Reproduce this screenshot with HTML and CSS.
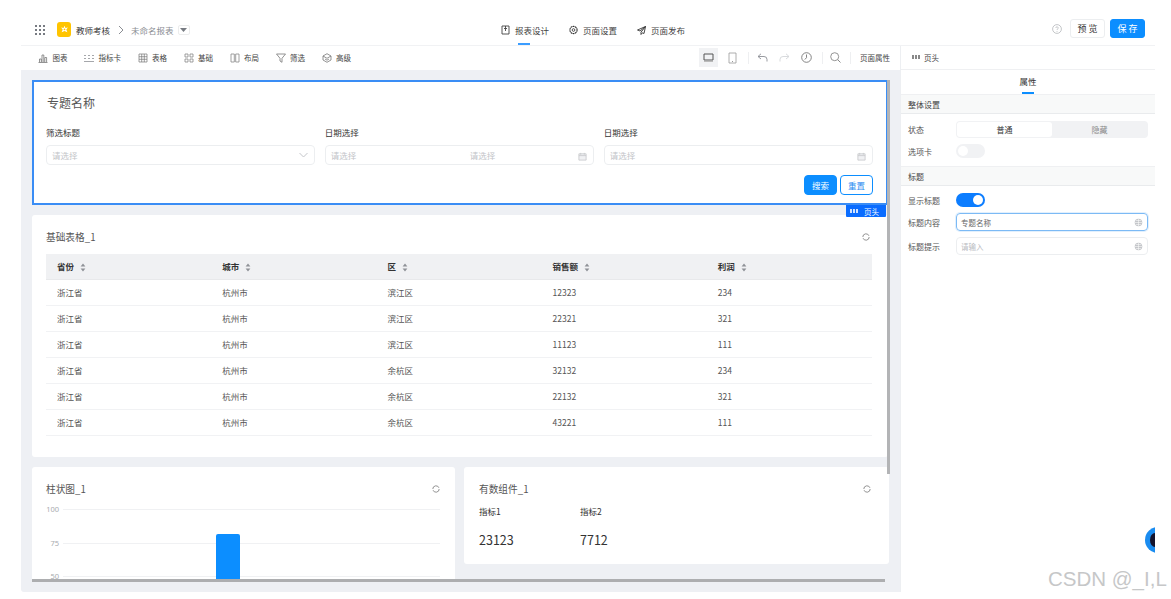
FILE: index.html
```html
<!DOCTYPE html>
<html lang="zh">
<head>
<meta charset="utf-8">
<title>未命名报表</title>
<link rel="stylesheet" href="styles.css">
</head>
<body>
<svg class="defs" width="0" height="0">
  <symbol id="refresh" viewBox="0 0 10 10"><path d="M8.700 3.500A4 4 0 0 0 1 5M1.300 6.500A4 4 0 0 0 9 5" fill="none" stroke="currentColor" stroke-width="1"/></symbol>
  <symbol id="sort" viewBox="0 0 6 9"><path d="M3 .5 5.400 3.500H.6zM3 8.500.6 5.500h4.800z" fill="currentColor"/></symbol>
  <symbol id="cal" viewBox="0 0 10 10"><path d="M1 2h8v7H1zM1 4h8M3 1v2M7 1v2" fill="#f0f1f3" stroke="currentColor" stroke-width=".9"/></symbol>
  <symbol id="globe" viewBox="0 0 10 10"><circle cx="5" cy="5" r="4.200" fill="#c4c6ca"/><path d="M1 5h8M5 1v8M2 2.800h6M2 7.200h6" stroke="#fff" stroke-width=".6"/></symbol>
</svg>
<div class="app">
  <header class="topbar">
    <div class="crumbs">
      <svg class="apps" width="10" height="10" viewBox="0 0 10 10"><path d="M0 0h2v2H0zM4 0h2v2H4zM8 0h2v2H8zM0 4h2v2H0zM4 4h2v2H4zM8 4h2v2H8zM0 8h2v2H0zM4 8h2v2H4zM8 8h2v2H8z" fill="#777b82"/></svg>
      <span class="logo"><svg width="9" height="9" viewBox="0 0 10 10"><path d="M5 .8 6 3.200 8.800 2.800 7 5l1.200 3L5 6.600 1.800 8 3 5 1.200 2.800 4 3.200z" fill="#fff"/><circle cx="5" cy="4.800" r="1" fill="#ffc400"/></svg></span>
      <span class="crumb-app">教师考核</span>
      <svg class="crumb-sep" width="6" height="10" viewBox="0 0 6 10"><path d="M1 1l4 4-4 4" fill="none" stroke="#8a8d93"/></svg>
      <span class="crumb-page">未命名报表</span>
      <span class="crumb-drop"><svg width="7" height="4" viewBox="0 0 7 4"><path d="M0 0h7L3.500 4z" fill="#777b82"/></svg></span>
    </div>
    <nav class="steps">
      <a class="step step-active">
        <svg width="9" height="10" viewBox="0 0 9 10"><path d="M1 1h7v8H1zM4.500 1v5M3 3.500h3" fill="none" stroke="#444" stroke-width=".9"/></svg>
        <span>报表设计</span>
      </a>
      <a class="step">
        <svg width="9" height="10" viewBox="0 0 10 10"><circle cx="5" cy="5" r="4" fill="none" stroke="#333" stroke-width="1.200" stroke-dasharray="2 .5"/><circle cx="5" cy="5" r="1.500" fill="none" stroke="#333" stroke-width=".9"/></svg>
        <span>页面设置</span>
      </a>
      <a class="step">
        <svg width="9" height="9" viewBox="0 0 9 9"><path d="M8.500.5.500 4l2.500 1 5.500-4.500L4 6.200V8.500L5.400 6.800 7 7.500z" fill="none" stroke="#333" stroke-width=".9" stroke-linejoin="round"/></svg>
        <span>页面发布</span>
      </a>
    </nav>
    <div class="actions">
      <svg width="10" height="10" viewBox="0 0 10 10"><circle cx="5" cy="5" r="4.400" fill="none" stroke="#b5b7bb" stroke-width=".8"/><path d="M3.800 4a1.200 1.200 0 1 1 1.700 1.100c-.4.200-.5.400-.5.900M5 7v.8" fill="none" stroke="#b5b7bb" stroke-width=".8"/></svg>
      <button class="btn btn-line">预 览</button>
      <button class="btn btn-main">保 存</button>
    </div>
  </header>

  <div class="body">
    <div class="workspace">
      <div class="toolbar">
        <div class="widgets">
          <a class="widget"><svg width="10" height="10" viewBox="0 0 10 10"><path d="M.5 9.500h9M1.500 9V6h1.800v3M4 9V2h1.800v7M6.800 9V4.500h1.800V9" fill="none" stroke="#777" stroke-width=".8"/></svg>图表</a>
          <a class="widget"><svg width="10" height="10" viewBox="0 0 10 10"><path d="M0 2.500h2M0 5.500h2M4 2.500h2M4 5.500h2M8 2.500h2M8 5.500h2M0 8.500h10" fill="none" stroke="#a5a7ab" stroke-width="1"/></svg>指标卡</a>
          <a class="widget"><svg width="10" height="10" viewBox="0 0 10 10"><path d="M1 1h8v8H1zM1 3.700h8M1 6.300h8M3.700 1v8M6.300 1v8" fill="none" stroke="#777" stroke-width=".7"/></svg>表格</a>
          <a class="widget"><svg width="10" height="10" viewBox="0 0 10 10"><path d="M1 1h3v3H1zM6 1h3v3H6zM1 6h3v3H1zM6 6h3v3H6z" fill="none" stroke="#888" stroke-width=".8"/></svg>基础</a>
          <a class="widget"><svg width="10" height="10" viewBox="0 0 10 10"><path d="M1 1h3.300v8H1zM5.700 1H9v8H5.700z" fill="none" stroke="#888" stroke-width=".8"/></svg>布局</a>
          <a class="widget"><svg width="10" height="10" viewBox="0 0 10 10"><path d="M.5 1h9L6 5.300v4L4 8V5.300z" fill="none" stroke="#777" stroke-width=".8" stroke-linejoin="round"/></svg>筛选</a>
          <a class="widget"><svg width="10" height="10" viewBox="0 0 10 10"><path d="M5 .7 9 3v4L5 9.300 1 7V3zM1 3l4 2.300L9 3M3 6l2 1.200L7 6" fill="none" stroke="#777" stroke-width=".8"/></svg>高级</a>
        </div>
        <div class="tools">
          <span class="tool-on"><svg width="11" height="9" viewBox="0 0 11 9"><path d="M1 1h9v6H1z" fill="none" stroke="#555"/><path d="M1 8.500h9" stroke="#bbb"/></svg></span>
          <span class="tool"><svg width="9" height="12" viewBox="0 0 9 12"><path d="M1 1h7v10H1z" fill="none" stroke="#999" stroke-width=".8"/><path d="M4 9.500h1" stroke="#999"/></svg></span>
          <i class="rule"></i>
          <span class="tool"><svg width="11" height="9" viewBox="0 0 11 9"><path d="M4 .8 1 3.500 4 6M1 3.500h6a3 3 0 0 1 3 3v2" fill="none" stroke="#8d9096" stroke-width=".9"/></svg></span>
          <span class="tool"><svg width="11" height="9" viewBox="0 0 11 9"><path d="M7 .8l3 2.700L7 6M10 3.500H4a3 3 0 0 0-3 3v2" fill="none" stroke="#d4d6d9" stroke-width=".9"/></svg></span>
          <span class="tool"><svg width="11" height="11" viewBox="0 0 11 11"><circle cx="5.500" cy="5.500" r="4.800" fill="none" stroke="#777" stroke-width=".9"/><path d="M5.500 2.500v3.200L3.800 7.500" fill="none" stroke="#777" stroke-width=".9"/></svg></span>
          <i class="rule"></i>
          <span class="tool tool-search"><svg width="11" height="11" viewBox="0 0 11 11"><circle cx="4.700" cy="4.700" r="4" fill="none" stroke="#888" stroke-width=".9"/><path d="M7.700 7.700 10.500 10.500" stroke="#888"/></svg></span>
          <i class="rule"></i>
          <span class="page-props">页面属性</span>
        </div>
      </div>

      <main class="canvas">
        <div class="scroller">
          <section class="head-card">
            <h1 class="head-title">专题名称</h1>
            <div class="filters">
              <div class="filter">
                <label class="filter-label">筛选标题</label>
                <div class="field"><span>请选择</span><svg class="field-end" width="9" height="6" viewBox="0 0 9 6"><path d="M.5 1 4.500 5l4-4" fill="none" stroke="#c4c6ca"/></svg></div>
              </div>
              <div class="filter">
                <label class="filter-label">日期选择</label>
                <div class="field"><span class="half">请选择</span><span>请选择</span><svg class="field-end" width="9" height="9"><use href="#cal"/></svg></div>
              </div>
              <div class="filter">
                <label class="filter-label">日期选择</label>
                <div class="field"><span>请选择</span><svg class="field-end" width="9" height="9"><use href="#cal"/></svg></div>
              </div>
            </div>
            <div class="form-btns">
              <button class="fbtn fbtn-main">搜索</button>
              <button class="fbtn fbtn-line">重置</button>
            </div>
            <div class="tag"><svg width="8" height="4" viewBox="0 0 8 4"><path d="M0 0h2v4H0zM3 0h2v4H3zM6 0h2v4H6z" fill="#cfe2ff"/></svg><span>页头</span></div>
          </section>

          <section class="card table-card">
            <div class="card-head"><h2>基础表格_1</h2><svg class="refresh" width="8" height="8"><use href="#refresh"/></svg></div>
            <table class="grid">
              <thead>
                <tr>
                  <th>省份<svg class="sort" width="6" height="9"><use href="#sort"/></svg></th>
                  <th>城市<svg class="sort" width="6" height="9"><use href="#sort"/></svg></th>
                  <th>区<svg class="sort" width="6" height="9"><use href="#sort"/></svg></th>
                  <th>销售额<svg class="sort" width="6" height="9"><use href="#sort"/></svg></th>
                  <th>利润<svg class="sort" width="6" height="9"><use href="#sort"/></svg></th>
                </tr>
              </thead>
              <tbody>
                <tr><td>浙江省</td><td>杭州市</td><td>滨江区</td><td>12323</td><td>234</td></tr>
                <tr><td>浙江省</td><td>杭州市</td><td>滨江区</td><td>22321</td><td>321</td></tr>
                <tr><td>浙江省</td><td>杭州市</td><td>滨江区</td><td>11123</td><td>111</td></tr>
                <tr><td>浙江省</td><td>杭州市</td><td>余杭区</td><td>32132</td><td>234</td></tr>
                <tr><td>浙江省</td><td>杭州市</td><td>余杭区</td><td>22132</td><td>321</td></tr>
                <tr><td>浙江省</td><td>杭州市</td><td>余杭区</td><td>43221</td><td>111</td></tr>
              </tbody>
            </table>
          </section>

          <div class="row">
            <section class="card chart-card">
              <div class="card-head"><h2>柱状图_1</h2><svg class="refresh" width="8" height="8"><use href="#refresh"/></svg></div>
              <svg class="chart" width="394" height="100" viewBox="0 0 394 100">
                <g class="axis-text"><text x="13" y="9" text-anchor="end">100</text><text x="13" y="43" text-anchor="end">75</text><text x="13" y="76" text-anchor="end">50</text></g>
                <path d="M17 6.500H394M17 40.500H394M17 73.500H394" stroke="#f0f1f3"/>
                <path d="M170 33a2 2 0 0 1 2-2h20a2 2 0 0 1 2 2v67h-24z" fill="#0c8eff"/>
              </svg>
            </section>
            <section class="card metric-card">
              <div class="card-head"><h2>有数组件_1</h2><svg class="refresh" width="8" height="8"><use href="#refresh"/></svg></div>
              <div class="metrics">
                <div class="metric"><span class="metric-name">指标1</span><strong class="metric-val">23123</strong></div>
                <div class="metric"><span class="metric-name">指标2</span><strong class="metric-val">7712</strong></div>
              </div>
            </section>
          </div>
        </div>
        <i class="bar-v"></i>
        <i class="bar-h"></i>
      </main>
    </div>

    <aside class="panel">
      <div class="panel-head"><svg width="8" height="4" viewBox="0 0 8 4"><path d="M0 0h2v4H0zM3 0h2v4H3zM6 0h2v4H6z" fill="#888"/></svg><span>页头</span></div>
      <div class="panel-tab"><span>属性</span></div>
      <div class="sec">整体设置</div>
      <div class="props props-a">
        <div class="prop"><label>状态</label>
          <div class="seg"><span class="seg-on">普通</span><span class="seg-off">隐藏</span></div>
        </div>
        <div class="prop"><label>选项卡</label><span class="sw"></span></div>
      </div>
      <div class="sec sec-b">标题</div>
      <div class="props props-b">
        <div class="prop"><label>显示标题</label><span class="sw sw-on"></span></div>
        <div class="prop"><label>标题内容</label>
          <div class="pinput pinput-focus"><span>专题名称</span><svg width="9" height="9"><use href="#globe"/></svg></div>
        </div>
        <div class="prop"><label>标题提示</label>
          <div class="pinput"><span class="ph">请输入</span><svg width="9" height="9"><use href="#globe"/></svg></div>
        </div>
      </div>
    </aside>
  </div>
  <span class="float-ball"></span>
</div>
<span class="watermark">CSDN @_I,L</span>
</body>
</html>
```

FILE: styles.css
```css
* { box-sizing: border-box; }
html, body { margin: 0; height: 100%; }
body {
  background: #fff;
  font-family: "Noto Sans CJK SC", "Noto Sans", sans-serif;
  font-size: 8.500px;
  color: #333;
  padding: 14px 16px 7px 21px;
  overflow: hidden;
  position: relative;
}
.defs { position: absolute; }
h1, h2 { margin: 0; font-weight: 400; }
a { color: inherit; }
button { font-family: inherit; cursor: pointer; padding: 0; }

.app {
  height: 100%;
  display: flex;
  flex-direction: column;
  background: #fff;
  border-radius: 3px;
  position: relative;
  overflow: hidden;
}

/* top bar */
.topbar {
  height: 32px;
  flex: none;
  display: grid;
  grid-template-columns: 1fr auto 1fr;
  align-items: center;
  padding: 0 10px 0 14px;
  border-bottom: 1px solid #f1f2f4;
}
.crumbs { display: flex; align-items: center; }
.logo {
  width: 14px; height: 15px;
  margin-left: 12px;
  border-radius: 3px;
  background: #ffc400;
  display: flex; align-items: center; justify-content: center;
}
.crumb-app { margin-left: 5px; font-size: 8.500px; color: #333; }
.crumb-sep { margin-left: 8px; }
.crumb-page { margin-left: 7px; color: #8b8e94; }
.crumb-drop {
  width: 12px; height: 10px;
  margin-left: 4px;
  border: 1px solid #eceded;
  border-radius: 2px;
  display: flex; align-items: center; justify-content: center;
}
.steps { display: flex; gap: 20px; margin-top: 1px; margin-left: 6px; }
.step { display: flex; align-items: center; gap: 5px; position: relative; height: 14px; color: #444; }
.step-active::after {
  content: "";
  position: absolute;
  left: 17px;
  bottom: -8px;
  width: 12px; height: 2px;
  background: #3b9dff;
}
.actions { display: flex; align-items: center; justify-content: flex-end; gap: 5px; margin-top: -2px; }
.actions svg { margin-right: 3px; }
.btn {
  width: 35px; height: 19px;
  border-radius: 3px;
  font-size: 9px;
  border: 1px solid #eceef0;
}
.btn-line { background: #fff; color: #333; }
.btn-main { background: #0c8eff; border-color: #0c8eff; color: #fff; }

/* body */
.body { flex: 1; min-height: 0; display: flex; }
.workspace { flex: 1; min-width: 0; display: flex; flex-direction: column; }

.toolbar {
  height: 24px;
  flex: none;
  display: flex;
  align-items: center;
  justify-content: space-between;
  padding: 0 10px 1px 17px;
  font-size: 7.500px;
}
.widgets { display: flex; gap: 16.500px; }
.widget { display: flex; align-items: center; gap: 4.500px; color: #444; }
.tools { display: flex; align-items: center; height: 19px; }
.tool-on {
  width: 19px; height: 19px;
  background: #f1f2f4;
  display: flex; align-items: center; justify-content: center;
}
.tool { display: flex; align-items: center; justify-content: center; width: 11px; margin-left: 11px; }
.tool-on + .tool { margin-left: 9px; }
.rule { width: 1px; height: 12px; background: #eeeff1; margin-left: 9.500px; }
.rule + .tool { margin-left: 8.500px; }
.rule + .tool-search { margin-left: 7.500px; }
.tool-search + .rule { margin-left: 8.500px; }
.page-props { margin-left: 9.500px; color: #444; }

.canvas {
  flex: 1;
  min-height: 0;
  background: #eef0f4;
  padding: 10px 11px;
  position: relative;
}
.scroller {
  height: 100%;
  display: flex;
  flex-direction: column;
  gap: 10px;
  overflow: hidden;
}
.scroller > * { flex: none; }

.head-card {
  height: 125px;
  margin-right: 1px;
  border: 2px solid #3a8df5;
  background: #fff;
  padding: 12px 13px 0 12px;
  position: relative;
}
.head-title { font-size: 12px; line-height: 18px; color: #555; margin-left: 1px; }
.filters { display: grid; grid-template-columns: repeat(3, minmax(0, 1fr)); gap: 9.500px; margin-top: 13px; }
.filter-label { display: block; line-height: 14px; color: #333; }
.field {
  height: 20px;
  margin-top: 6px;
  border: 1px solid #eceef0;
  border-radius: 4px;
  padding: 0 5px;
  display: flex;
  align-items: center;
  color: #c2c4c8;
  position: relative;
}
.half { width: 139px; flex: none; }
.field-end { position: absolute; right: 6px; top: 6px; color: #c6c8cb; }
.form-btns { display: flex; justify-content: flex-end; gap: 3px; margin-top: 10px; }
.fbtn { width: 33px; height: 20px; border-radius: 4px; font-size: 8.500px; border: 1px solid #0c8eff; }
.fbtn-main { background: #0c8eff; color: #fff; }
.fbtn-line { background: #fff; color: #2b8cf0; }
.tag {
  position: absolute;
  right: 0; bottom: -14px;
  width: 40px; height: 12px;
  background: #0a6cff;
  color: #fff;
  font-size: 7.500px;
  display: flex; align-items: center; gap: 6px;
  padding-left: 4px;
  border-radius: 0 0 1px 1px;
  z-index: 2;
}

.card { background: #fff; border-radius: 3px; }
.table-card { height: 242px; margin-right: 1px; padding: 0 16px 0 14px; }
.card-head { display: flex; align-items: center; justify-content: space-between; height: 39px; padding-top: 5px; }
.card-head h2 { font-size: 9.700px; color: #555; }
.refresh { color: #777; }
.table-card .refresh { margin-right: 2px; }

.grid { width: 100%; table-layout: fixed; border-collapse: collapse; }
.grid th {
  height: 25px;
  background: #f0f1f3;
  border-bottom: 1px solid #e8e9eb;
  padding: 0 11px;
  text-align: left;
  font-weight: 700;
  color: #333;
}
.grid td {
  height: 26px;
  padding: 0 11px;
  border-bottom: 1px solid #f1f2f4;
  color: #555;
}
.sort { margin-left: 6px; color: #8f9297; vertical-align: -1.500px; }

.row { display: flex; gap: 9px; align-items: flex-start; }
.chart-card { width: 423px; height: 200px; padding: 0 15px 0 14px; }
.chart-card .card-head { height: 36px; padding-top: 8px; }
.chart { display: block; }
.axis-text { font-size: 7.500px; fill: #a8abaf; font-family: "Noto Sans", sans-serif; }
.metric-card { flex: 1; height: 97px; padding: 0 18px 0 15px; }
.metric-card .card-head { height: 35px; padding-top: 8px; }
.metrics { display: flex; }
.metric { width: 101px; display: flex; flex-direction: column; }
.metric-name { line-height: 18px; color: #333; }
.metric-val { font-weight: 400; font-size: 12.500px; line-height: 18px; margin-top: 11px; color: #333; }

.bar-v { position: absolute; left: 866px; top: 10px; width: 3px; height: 394px; background: #b3b4b6; }
.bar-h { position: absolute; left: 11px; top: 509px; width: 853px; height: 3px; background: #adaeb0; }

/* right panel */
.panel { width: 255px; flex: none; border-left: 1px solid #edeff2; background: #fff; }
.panel-head {
  height: 24px;
  padding: 0 0 1px 11px;
  display: flex; align-items: center; gap: 4px;
  font-size: 7.500px;
  border-bottom: 1px solid #eff0f2;
  color: #444;
}
.panel-tab {
  height: 24px;
  padding-bottom: 2px;
  display: flex; align-items: center; justify-content: center;
  position: relative;
  color: #333;
}
.panel-tab::after {
  content: "";
  position: absolute;
  left: 121px; bottom: 0;
  width: 12px; height: 2px;
  background: #0c8eff;
}
.sec {
  height: 20px;
  padding-left: 7px;
  display: flex; align-items: center;
  background: #f8f9f9;
  border-top: 1px solid #eff0f2;
  border-bottom: 1px solid #e9ebed;
  font-size: 8px;
  color: #444;
}
.props { padding: 7px 7px 0; display: flex; flex-direction: column; }
.props-a { gap: 6px; height: 52px; }
.props-b { gap: 6px; }
.prop { display: flex; align-items: center; }
.prop label { width: 48px; flex: none; font-size: 8px; color: #555; }
.seg {
  width: 192px; height: 17px;
  padding: 1px;
  background: #f1f2f4;
  border-radius: 4px;
  display: flex;
  font-size: 8px;
}
.seg span { flex: 1; display: flex; align-items: center; justify-content: center; border-radius: 3px; }
.seg-on { background: #fff; color: #333; }
.seg-off { color: #888; }
.sw {
  width: 29px; height: 14px;
  border-radius: 7px;
  background: #f1f2f4;
  position: relative;
}
.sw::after {
  content: "";
  position: absolute;
  left: 2px; top: 2px;
  width: 10px; height: 10px;
  border-radius: 50%;
  background: #fff;
}
.sw-on { background: #0c7dff; }
.sw-on::after { left: 17px; }
.pinput {
  width: 192px; height: 18px;
  border: 1px solid #eceef0;
  border-radius: 4px;
  padding: 0 4px;
  display: flex; align-items: center; justify-content: space-between;
  font-size: 7.500px;
  color: #666;
}
.pinput-focus { border-color: #7cbaf5; box-shadow: 0 0 0 1px #e2f0fd; }
.ph { color: #b9bbbf; }

.float-ball {
  position: absolute;
  right: -16px; top: 513px;
  width: 26px; height: 26px;
  border-radius: 50%;
  background: #1a8cf0;
}
.float-ball::after {
  content: "";
  position: absolute;
  left: 5px; top: 6px;
  width: 10px; height: 14px;
  border-radius: 50%;
  background: #14142e;
}
.watermark {
  position: absolute;
  left: 1048px; top: 567px;
  font-family: "Liberation Sans", sans-serif;
  font-size: 20.500px;
  line-height: 24px;
  color: #c6c7c8;
  white-space: nowrap;
}
```
